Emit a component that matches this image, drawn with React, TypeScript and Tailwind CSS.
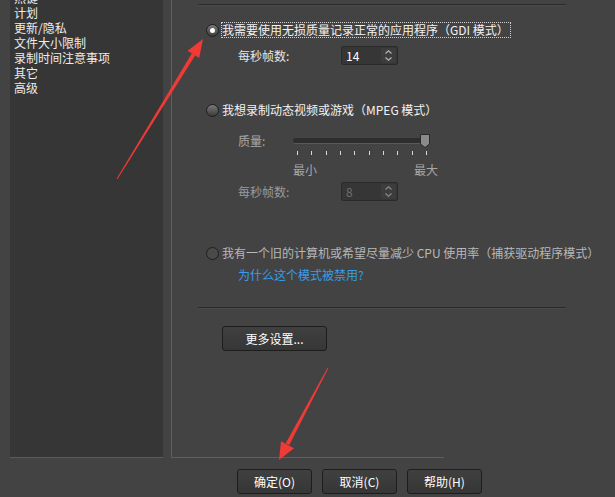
import React from "react";

const font = { fontFamily: '"Noto Sans CJK SC", "Noto Sans", sans-serif' };

function Radio({ checked, disabled }: { checked?: boolean; disabled?: boolean }) {
  return (
    <div
      className={`w-[13px] h-[13px] rounded-full border border-[#1e1e1e] flex items-center justify-center shrink-0 ${
        disabled ? "bg-[#4a4a4a]" : "bg-gradient-to-b from-[#7a7a7a] to-[#3c3c3c]"
      }`}
    >
      {checked && <div className="w-[5px] h-[5px] rounded-full bg-white" />}
    </div>
  );
}

function Spinner({ value, disabled }: { value: string; disabled?: boolean }) {
  return (
    <div className="w-[57px] h-[19px] rounded-[2px] border border-[#2a2a2a] bg-[#363636] flex items-center justify-between pl-[4px] pr-[1px]">
      <span className={`text-[12px] leading-none ${disabled ? "text-[#6e6e6e]" : "text-white"}`}>{value}</span>
      <div className="w-[15px] h-[15px] rounded-[2px] bg-[#3d3d3d] flex flex-col items-center justify-center">
        <svg width="9" height="13" viewBox="0 0 9 13" fill="none" stroke={disabled ? "#8a8a8a" : "#b5b5b5"} strokeWidth="1.2">
          <path d="M1.5 4.5 L4.5 1.8 L7.5 4.5" />
          <path d="M1.5 8.5 L4.5 11.2 L7.5 8.5" />
        </svg>
      </div>
    </div>
  );
}

function Btn({ label, w = 75 }: { label: string; w?: number }) {
  return (
    <div
      className="h-[25px] rounded-[3px] border border-[#1d1d1d] bg-gradient-to-b from-[#404040] to-[#363636] flex items-center justify-center text-[12px] text-white"
      style={{ width: w }}
    >
      {label}
    </div>
  );
}

export default function App() {
  const ticks = Array.from({ length: 10 }, (_, i) => i);
  return (
    <div className="w-[615px] h-[497px] bg-[#434343] relative overflow-hidden flex flex-col text-[12px]" style={font}>
      <div className="h-[458px] flex shrink-0">
        {/* sidebar */}
        <div className="ml-[10px] w-[153px] h-full bg-[#363636] border-b border-[#5c5c5c] overflow-hidden">
          <div className="-mt-[10px] pl-[4px] text-[#ececec] leading-[15px]">
            <div>热键</div>
            <div>计划</div>
            <div>更新/隐私</div>
            <div>文件大小限制</div>
            <div>录制时间注意事项</div>
            <div>其它</div>
            <div>高级</div>
          </div>
        </div>
        {/* panel */}
        <div className="ml-[8px] flex-1 h-full border-l border-[#5f5f5f] flex flex-col">
          <div className="flex-1 pl-[26px]">
            <div className="w-[368px] mt-[4px] h-[2px] border-t border-[#2a2a2a] border-b border-b-[#4a4a4a]" />
            {/* GDI */}
            <div className="pl-[8px]">
              <div className="mt-[16px] h-[16px] flex items-center">
                <Radio checked />
                <div className="ml-[2px] h-[16px] border border-dotted border-[#d0d0d0] flex items-center pr-[1px] text-[#f2f2f2] leading-none whitespace-nowrap">
                  我需要使用无损质量记录正常的应用程序（GDI 模式）
                </div>
              </div>
              <div className="mt-[8px] h-[19px] flex items-center pl-[32px]">
                <span className="w-[103px] text-[#e6e6e6]">每秒帧数:</span>
                <Spinner value="14" />
              </div>
              {/* MPEG */}
              <div className="mt-[37px] h-[16px] flex items-center">
                <Radio />
                <span className="ml-[3px] text-[#f2f2f2] leading-none whitespace-nowrap">我想录制动态视频或游戏（MPEG 模式）</span>
              </div>
              <div className="pl-[32px]">
                <div className="mt-[16px] h-[14px] flex items-center">
                  <span className="w-[55px] text-[#a8a8a8]">质量:</span>
                  <div className="relative w-[136px] h-[14px] flex items-center">
                    <div className="w-[135px] h-[6px] rounded-[2px] bg-[#2e2e2e] border-b border-[#595959]" />
                    <svg className="absolute left-[127px] top-0" width="10" height="14" viewBox="0 0 10 14">
                      <path d="M0.5 0.5 H9.5 V10 L5 13.5 L0.5 10 Z" fill="#8a8a8a" stroke="#2a2a2a" />
                    </svg>
                  </div>
                </div>
                <div className="mt-[3px] h-[4px] relative ml-[59px] w-[140px]">
                  {ticks.map((i) => (
                    <div key={i} className="absolute top-0 w-px h-[4px] bg-[#d8d8d8]" style={{ left: Math.round(i * 14.33) }} />
                  ))}
                </div>
                <div className="mt-[8px] h-[14px] ml-[55px] w-[145px] flex justify-between items-center text-[#a8a8a8] leading-none">
                  <span>最小</span>
                  <span>最大</span>
                </div>
                <div className="mt-[5px] h-[19px] flex items-center">
                  <span className="w-[103px] text-[#9a9a9a]">每秒帧数:</span>
                  <Spinner value="8" disabled />
                </div>
              </div>
              {/* driver */}
              <div className="mt-[44px] h-[16px] flex items-center">
                <Radio disabled />
                <span className="ml-[3px] text-[#b8b8b8] leading-none whitespace-nowrap">
                  我有一个旧的计算机或希望尽量减少 CPU 使用率（捕获驱动程序模式）
                </span>
              </div>
              <div className="mt-[7px] h-[14px] pl-[32px] flex items-center text-[#3a9bea] leading-none">为什么这个模式被禁用?</div>
            </div>
            <div className="w-[368px] mt-[25px] h-[2px] border-t border-[#2a2a2a] border-b border-b-[#4a4a4a]" />
            <div className="mt-[17px] pl-[24px]">
              <Btn label="更多设置..." w={105} />
            </div>
          </div>
          <div className="h-px w-[272px] bg-[#5f5f5f]" />
        </div>
      </div>
      {/* bottom buttons */}
      <div className="flex pl-[237px] pt-[11px] gap-[10px]">
        <Btn label="确定(O)" />
        <Btn label="取消(C)" />
        <Btn label="帮助(H)" />
      </div>
      {/* red annotation arrows */}
      <svg className="absolute left-0 top-0 pointer-events-none" width="615" height="497" viewBox="0 0 615 497">
        <polygon points="116.6,178.7 117.4,179.3 195.3,55.3 191.9,53.2" fill="#f03a36" />
        <polygon points="203,39 199.2,57.9 187.6,50.8" fill="#f03a36" />
        <polygon points="327.6,367.8 328.4,368.2 289.3,445.1 285.7,443.2" fill="#f03a36" />
        <polygon points="279,460 294,448.3 281,441.3" fill="#f03a36" />
      </svg>
    </div>
  );
}
